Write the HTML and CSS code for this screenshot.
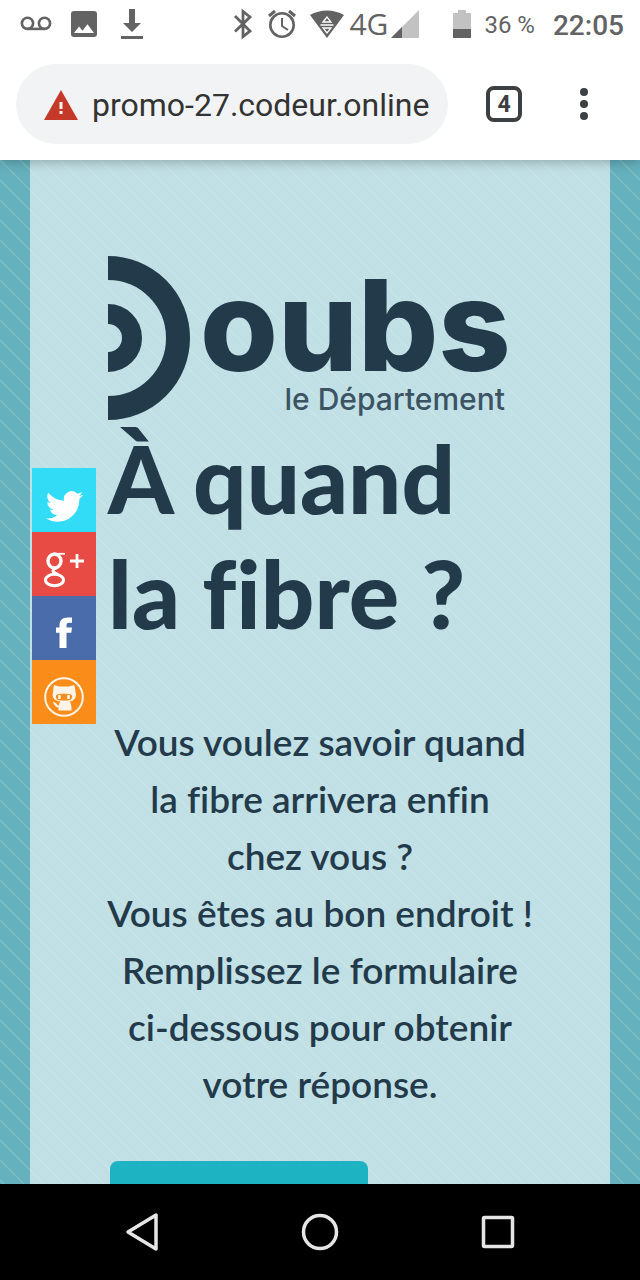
FILE: index.html
```
<!DOCTYPE html>
<html lang="fr">
<head>
<meta charset="utf-8">
<meta name="viewport" content="width=device-width, initial-scale=1">
<title>À quand la fibre ?</title>
<link rel="stylesheet" href="styles.css">
</head>
<body>
<div class="status-bar">
  <div class="status-group notifications">
    <svg class="icon" width="32" height="32" viewBox="0 0 32 32" fill="none" stroke="#636363" stroke-width="2.6"><circle cx="7.5" cy="15.3" r="5.6"/><circle cx="24.5" cy="15.3" r="5.6"/><path d="M7.5 20.9h17" stroke-width="2.6"/></svg>
    <svg class="icon" width="32" height="32" viewBox="0 0 32 32"><path fill="#636363" fill-rule="evenodd" d="M6 3h20a3 3 0 0 1 3 3v20a3 3 0 0 1-3 3H6a3 3 0 0 1-3-3V6a3 3 0 0 1 3-3ZM6 25h20l-6.500-8.700-5 6.400-3.500-4.300Z"/></svg>
    <svg class="icon" width="32" height="32" viewBox="0 0 32 32" fill="#636363"><path d="M13 1h6v14h6l-9 9-9-9h6ZM5 28h22v3H5z"/></svg>
  </div>
  <div class="status-group system">
    <svg class="icon" width="20" height="32" viewBox="0 0 20 32" fill="none" stroke="#636363" stroke-width="2.8"><path d="m2 8 15 15-7 5.500V3.500L17 9 2 23.500"/></svg>
    <svg class="icon alarm" width="30" height="32" viewBox="0 0 30 32" fill="none" stroke="#636363" stroke-width="2.6"><circle cx="15" cy="17" r="11.700"/><path d="M15 10v8l6 4" stroke-width="2"/><path d="m2 8 6-5M28 8l-6-5" stroke-width="3"/></svg>
    <svg class="icon wifi" width="36" height="32" viewBox="0 0 36 32"><path fill="#636363" d="M1 7C11 1 25 1 35 7L18 30Z"/><path fill="none" stroke="#fff" stroke-width="1.300" d="m14 14 4-5 4 5ZM14 20h8l-4 5ZM11.500 17h13"/></svg>
    <span class="network">4G</span>
    <svg class="icon signal" width="30" height="32" viewBox="0 0 30 32"><path fill="#c2c2c2" d="M29 2v28H1Z"/><path fill="#636363" d="M12 19v11H1Z"/></svg>
    <svg class="icon battery" width="20" height="32" viewBox="0 0 20 32"><path fill="#c2c2c2" d="M1 5h5V2h8v3h5v16H1z"/><path fill="#636363" d="M1 21h18v9H1z"/></svg>
    <span class="charge">36 %</span>
    <span class="clock">22:05</span>
  </div>
</div>
<header class="toolbar">
  <button class="address" type="button">
    <svg width="34" height="30" viewBox="0 0 34 30"><path fill="#c53929" d="M17 0 34 30H0Z"/><path fill="#f1f3f4" d="M15.500 12h3v7h-3zM15.500 21h3v3h-3z"/></svg>
    <span>promo-27.codeur.online</span>
  </button>
  <button class="tabs" type="button" aria-label="Onglets">4</button>
  <button class="menu" type="button" aria-label="Menu">
    <svg width="12" height="34" viewBox="0 0 12 34" fill="#3c4043"><circle cx="6" cy="5" r="4"/><circle cx="6" cy="17" r="4"/><circle cx="6" cy="29" r="4"/></svg>
  </button>
</header>
<div class="page">
  <nav class="social" aria-label="Partager">
    <a class="twitter" href="#" aria-label="Twitter"><svg width="40" height="40" viewBox="0 0 24 24" fill="#fff"><path transform="translate(0 1)" d="M23.500 4.900c-.8.400-1.700.6-2.600.8a4.600 4.600 0 0 0 2-2.500c-.9.500-1.900.9-2.900 1.100a4.600 4.600 0 0 0-7.900 4.200A13.100 13.100 0 0 1 2.600 3.700a4.600 4.600 0 0 0 1.400 6.100c-.7 0-1.400-.2-2-.6a4.600 4.600 0 0 0 3.700 4.600c-.7.200-1.400.2-2.100.1a4.600 4.600 0 0 0 4.300 3.200A9.300 9.300 0 0 1 1 19a13.100 13.100 0 0 0 20.200-11.700c.9-.6 1.700-1.400 2.300-2.400Z"/></svg></a>
    <a class="google" href="#" aria-label="Google+"><svg width="40" height="40" viewBox="0 0 40 40" fill="none" stroke="#fff"><ellipse cx="10.500" cy="12" rx="6.500" ry="7" stroke-width="3.400"/><path d="M11 4.800h10" stroke-width="1.800"/><path d="M13 18.500c-6 3-5 4.500 1 7" stroke-width="3"/><ellipse cx="10.500" cy="31" rx="9" ry="5.800" stroke-width="3"/><path d="M26 12h14M33 5v14" stroke-width="2.800"/></svg></a>
    <a class="facebook" href="#" aria-label="Facebook"><svg width="40" height="40" viewBox="0 0 40 40" fill="#fff"><path d="M28 4.500h-4c-6 0-8.500 3-8.500 8v2H12v5.300h3.500V35h7V19.800h4.800l.7-5.300h-5.500v-2c0-2 .8-2.700 2.500-2.700h3Z"/></svg></a>
    <a class="github" href="#" aria-label="GitHub"><svg width="40" height="40" viewBox="0 0 40 40"><circle cx="20" cy="20" r="18.800" fill="none" stroke="#fff" stroke-opacity=".9" stroke-width="2"/><path fill="#fff" fill-opacity=".9" d="m10 8 5.500 1.500h9L30 8c1.500 3 1 5 1.500 7 1.500 6-1.500 9-6 9.500 2 2 2 5 2 9h-13v-3c-4 0-3-3-6-5 4-1 4 3 6.500 3 0-2 .5-3 1.500-4-6-.5-9-4-7.500-9.500.5-2 0-4 1-7Z"/><path fill="#fa8d19" d="M13 17.500c3-1 11-1 14 0 2 1 1 5-1 5.500-3 .7-9 .7-12 0-2-.5-3-4.500-1-5.500Z"/><path fill="none" stroke="#fff" stroke-width="2.500" d="M15.500 18v4M24.500 18v4"/></svg></a>
  </nav>
  <main class="content">
    <svg class="logo" viewBox="0 0 400 164" role="img" aria-label="Doubs le Département">
      <g fill="none" stroke="#233a4b"><path stroke-width="24" d="M0 12a70 70 0 0 1 0 140"/><path stroke-width="20" d="M0 58a24 24 0 0 1 0 48"/></g>
      <text class="logo-name" x="92" y="115">oubs</text>
      <text class="logo-sub" x="397" y="154" text-anchor="end">le Département</text>
    </svg>
    <h1 class="title">À quand<br>la fibre ?</h1>
    <p class="intro">Vous voulez savoir quand<br>la fibre arrivera enfin<br>chez vous ?<br>Vous êtes au bon endroit !<br>Remplissez le formulaire<br>ci-dessous pour obtenir<br>votre réponse.</p>
    <button class="action" type="button" aria-label="Commencer"></button>
  </main>
</div>
<footer class="nav-bar">
  <button type="button" aria-label="Retour"><svg width="40" height="40" viewBox="0 0 40 40"><path d="M34 3v34L6 20Z"/></svg></button>
  <button type="button" aria-label="Accueil"><svg width="40" height="40" viewBox="0 0 40 40"><circle cx="20" cy="20" r="16.500"/></svg></button>
  <button type="button" aria-label="Aperçu"><svg width="40" height="40" viewBox="0 0 40 40"><rect x="5.500" y="5.500" width="29" height="29" rx="1"/></svg></button>
</footer>
</body>
</html>
```
FILE: styles.css
```
* { box-sizing: border-box; }
body {
  margin: 0;
  height: 100vh;
  display: flex;
  flex-direction: column;
  background: #fff;
  font-family: Roboto, sans-serif;
}
button { border: 0; padding: 0; background: none; font: inherit; color: inherit; }
svg { display: block; flex: none; }

.status-bar {
  position: relative;
  z-index: 3;
  flex: none;
  height: 48px;
  padding: 0 16px 0 20px;
  display: flex;
  justify-content: space-between;
  align-items: center;
  background: #fff;
  color: #636363;
}
.status-group { display: flex; align-items: center; }
.notifications { gap: 16px; }
.alarm { margin-left: 14px; }
.wifi { margin-left: 12px; }
.network { margin-left: 4px; font-family: "Open Sans", sans-serif; font-size: 30px; line-height: 48px; }
.signal { margin-left: 2px; }
.battery { margin-left: 32px; }
.charge { margin-left: 12px; padding-top: 2px; font-size: 24px; }
.clock { margin-left: 18px; padding-top: 2px; font-size: 28px; font-weight: 500; }

.toolbar {
  position: relative;
  z-index: 2;
  flex: none;
  height: 112px;
  padding: 0 50px 0 16px;
  display: flex;
  align-items: center;
  background: #fff;
  box-shadow: 0 1px 12px rgba(0, 0, 0, .3);
}
.address {
  flex: 1;
  height: 80px;
  padding: 2px 0 0 28px;
  display: flex;
  align-items: center;
  gap: 14px;
  border-radius: 40px;
  background: #f1f3f4;
  color: #333;
  font-size: 32px;
  white-space: nowrap;
}
.tabs {
  width: 36px;
  height: 36px;
  margin: 0 56px 0 38px;
  border: 4px solid #3c4043;
  border-radius: 8px;
  color: #3c4043;
  font-size: 23px;
  font-weight: 700;
  line-height: 30px;
}

.page {
  --stripe: rgba(215, 235, 200, .22);
  --stripes: linear-gradient(45deg, var(--stripe) 0, transparent 5%, transparent 45%, var(--stripe) 50%, transparent 55%, transparent 95%, var(--stripe) 100%);
  position: relative;
  flex: 1;
  min-height: 0;
  overflow: hidden;
  padding: 0 30px;
  background: var(--stripes) 0 0 / 20px 20px #65b1be;
}
.content {
  --stripe: rgba(208, 233, 232, .5);
  --stripes: linear-gradient(45deg, var(--stripe) 0, transparent 5%, transparent 45%, var(--stripe) 50%, transparent 55%, transparent 95%, var(--stripe) 100%);
  padding: 96px 78px 0;
  background: var(--stripes) 10px 0 / 20px 20px #c1e0e5;
  color: #233a4b;
  font-family: Lato, sans-serif;
  font-variant-ligatures: none;
}
.logo { width: 100%; max-width: 400px; overflow: visible; }
.logo-name { fill: #233a4b; font: 800 126px Inter, sans-serif; }
.logo-sub { fill: #3c5364; font: 500 30px Inter, sans-serif; }
.title {
  margin: 0;
  font-size: 94px;
  font-weight: 900;
  line-height: 115px;
  white-space: nowrap;
}
.intro {
  margin: 63px -8px 49px;
  font-size: 37px;
  font-weight: 600;
  line-height: 57px;
  text-align: center;
  white-space: nowrap;
}
.action {
  width: 258px;
  height: 80px;
  margin-left: 2px;
  display: block;
  border-radius: 8px;
  background: #1eb3c3;
}
.social { position: absolute; z-index: 1; left: 32px; top: 308px; width: 64px; }
.social a { height: 64px; display: flex; justify-content: center; align-items: center; padding-top: 10px; }
.twitter { background: #32dcf6; }
.google { background: #e84b43; }
.facebook { background: #4a6caa; }
.github { background: #fa8d19; }

.nav-bar {
  flex: none;
  height: 96px;
  padding: 0 53px;
  display: flex;
  align-items: center;
  background: #000;
}
.nav-bar button { flex: 1; display: flex; justify-content: center; }
.nav-bar svg { fill: none; stroke: #e6e6e6; stroke-width: 3.500; stroke-linejoin: round; }
```
